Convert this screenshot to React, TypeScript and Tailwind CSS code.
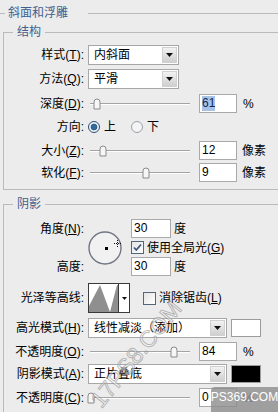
import React from 'react';

type LabelProps = { text: string; hot?: string };

function Label({ text, hot }: LabelProps) {
  return (
    <span className="w-[80px] shrink-0 whitespace-nowrap text-right">
      {text}
      {hot && (
        <>
          (<span className="underline underline-offset-[1px]">{hot}</span>)
        </>
      )}
      :
    </span>
  );
}

function Select({ value, width }: { value: string; width: string }) {
  return (
    <div className={`ml-[4px] flex h-[20px] items-stretch border border-[#a7a7a7] bg-white ${width}`}>
      <span className="flex-1 overflow-hidden whitespace-nowrap pl-[5px] leading-[18px]">{value}</span>
      <span className="m-[1px] flex w-[15px] items-center justify-center border border-[#d0d0d0] bg-gradient-to-b from-[#f2f2f2] to-[#cfcfcf]">
        <svg width="7" height="4" viewBox="0 0 7 4">
          <path d="M0 0h7L3.5 4z" fill="#111" />
        </svg>
      </span>
    </div>
  );
}

function Slider({ pos }: { pos: number }) {
  return (
    <div className="relative ml-[6px] h-[14px] w-[100px]">
      <div className="absolute left-0 right-0 top-[6px] h-[2px] border-b border-white bg-[#a4a4a4]" />
      <svg
        className="absolute top-[1px]"
        style={{ left: pos - 4 }}
        width="8"
        height="12"
        viewBox="0 0 8 12"
      >
        <path d="M1 4a3 3 0 0 1 6 0v7H1z" fill="#f6f6f6" stroke="#8a8a8a" />
      </svg>
    </div>
  );
}

function Field({ value, selected, width = 'w-[38px]', className = 'ml-[9px]' }: { value: string; selected?: boolean; width?: string; className?: string }) {
  return (
    <div className={`flex h-[19px] items-center border border-[#a9a9a9] bg-white pl-[2px] leading-[15px] ${width} ${className}`}>
      {selected ? <span className="bg-[#a8c2e6] text-[#10285a]">{value}</span> : <span>{value}</span>}
    </div>
  );
}

function Radio({ checked }: { checked?: boolean }) {
  return (
    <svg width="12" height="12" viewBox="0 0 12 12">
      <circle cx="6" cy="6" r="5.5" fill={checked ? '#eef2f7' : '#f4f4f4'} stroke={checked ? '#2b4c74' : '#9aa0a8'} />
      {checked && <circle cx="6" cy="6" r="3" fill="#2f6b9e" stroke="#1d4166" strokeWidth="0.6" />}
    </svg>
  );
}

function Checkbox({ checked }: { checked?: boolean }) {
  return (
    <span className="flex h-[13px] w-[13px] items-center justify-center border border-[#55657a] bg-gradient-to-br from-[#e4e4e4] to-white">
      {checked && (
        <svg width="9" height="9" viewBox="0 0 9 9">
          <path d="M1 4.5l2.3 2.5L8 1.5" fill="none" stroke="#3a5680" strokeWidth="1.8" />
        </svg>
      )}
    </span>
  );
}

function Group({ title, className = '', children }: { title: string; className?: string; children: React.ReactNode }) {
  return (
    <fieldset className={`ml-[3px] w-[290px] border border-[#bababa] ${className}`}>
      <legend className="ml-[9px] px-[4px] text-[12px] leading-[16px] text-[#3f5f8f]">{title}</legend>
      {children}
    </fieldset>
  );
}

export default function App() {
  return (
    <div className="relative h-[412px] w-[278px] overflow-hidden bg-[#ececec] font-['Liberation_Sans','Noto_Sans_CJK_SC',sans-serif] text-[12px] text-black">
      {/* section header */}
      <div className="flex h-[24px] items-center pt-[2px]">
        <div className="w-[5px] border-t border-[#bababa]" />
        <span className="ml-[3px] leading-[16px] text-[#3f5f8f]">斜面和浮雕</span>
        <div className="ml-[20px] flex-1 border-t border-[#bababa]" />
      </div>

      <Group title="结构">
        <div className="pb-[7px] pt-[5px]">
          <div className="flex h-[20px] items-center">
            <Label text="样式" hot="T" />
            <Select value="内斜面" width="w-[91px]" />
          </div>
          <div className="mt-[4px] flex h-[20px] items-center">
            <Label text="方法" hot="Q" />
            <Select value="平滑" width="w-[91px]" />
          </div>
          <div className="mt-[5px] flex h-[19px] items-center">
            <Label text="深度" hot="D" />
            <Slider pos={7} />
            <Field value="61" selected />
            <span className="ml-[6px]">%</span>
          </div>
          <div className="flex h-[27px] items-center">
            <Label text="方向" />
            <span className="ml-[4px] flex items-center">
              <Radio checked />
            </span>
            <span className="ml-[4px]">上</span>
            <span className="ml-[15px] flex items-center">
              <Radio />
            </span>
            <span className="ml-[4px]">下</span>
          </div>
          <div className="mt-[1px] flex h-[19px] items-center">
            <Label text="大小" hot="Z" />
            <Slider pos={13} />
            <Field value="12" />
            <span className="ml-[5px]">像素</span>
          </div>
          <div className="mt-[3px] flex h-[19px] items-center">
            <Label text="软化" hot="F" />
            <Slider pos={56} />
            <Field value="9" />
            <span className="ml-[5px]">像素</span>
          </div>
        </div>
      </Group>

      <Group title="阴影" className="mt-[6px] h-[260px]">
        <div className="pt-[7px]">
          <div className="flex h-[57px] items-center">
            <div className="flex h-full w-[80px] flex-col justify-between">
              <div className="flex h-[19px] items-center justify-end">
                <Label text="角度" hot="N" />
              </div>
              <div className="flex h-[19px] items-center justify-end">
                <Label text="高度" />
              </div>
            </div>
            <svg className="ml-[4px]" width="34" height="34" viewBox="0 0 34 34">
              <circle cx="17" cy="17" r="16" fill="#f1f1f1" stroke="#727585" strokeWidth="1.4" />
              <rect x="17" y="16" width="3" height="3" fill="#000" />
              <g stroke="#111" strokeWidth="1" strokeDasharray="1 1">
                <line x1="26" y1="12.5" x2="33" y2="12.5" />
                <line x1="29.5" y1="9" x2="29.5" y2="16" />
              </g>
            </svg>
            <div className="ml-[9px] flex flex-col">
              <div className="flex h-[19px] items-center">
                <Field value="30" width="w-[40px]" className="" />
                <span className="ml-[3px]">度</span>
              </div>
              <div className="flex h-[19px] items-center">
                <Checkbox checked />
                <span className="ml-[3px]">
                  使用全局光(<span className="underline underline-offset-[1px]">G</span>)
                </span>
              </div>
              <div className="flex h-[19px] items-center">
                <Field value="30" width="w-[40px]" className="" />
                <span className="ml-[3px]">度</span>
              </div>
            </div>
          </div>

          <div className="mt-[7px] flex h-[30px] items-center">
            <Label text="光泽等高线" />
            <div className="ml-[4px] flex h-[30px] w-[42px] border border-[#3a3a3a] bg-white">
              <svg width="29" height="28" viewBox="0 0 29 28">
                <path d="M0 28L0 22L11 1L21 28L28 1L29 1L29 28z" fill="#8f8f8f" />
              </svg>
              <div className="flex flex-1 items-center justify-center border-l border-[#3a3a3a]">
                <svg width="5" height="3" viewBox="0 0 5 3">
                  <path d="M0 0h5L2.5 3z" fill="#111" />
                </svg>
              </div>
            </div>
            <span className="ml-[13px]">
              <Checkbox />
            </span>
            <span className="ml-[3px]">
              消除锯齿(<span className="underline underline-offset-[1px]">L</span>)
            </span>
          </div>

          <div className="mt-[5px] flex h-[20px] items-center">
            <Label text="高光模式" hot="H" />
            <Select value="线性减淡（添加）" width="w-[139px]" />
            <div className="ml-[4px] h-[18px] w-[30px] border border-[#9c9c9c] bg-white" />
          </div>
          <div className="mt-[4px] flex h-[19px] items-center">
            <Label text="不透明度" hot="O" />
            <Slider pos={84} />
            <Field value="84" />
            <span className="ml-[6px]">%</span>
          </div>
          <div className="mt-[3px] flex h-[20px] items-center">
            <Label text="阴影模式" hot="A" />
            <Select value="正片叠底" width="w-[139px]" />
            <div className="ml-[4px] h-[18px] w-[30px] border border-[#9c9c9c] bg-black" />
          </div>
          <div className="mt-[4px] flex h-[19px] items-center">
            <Label text="不透明度" hot="C" />
            <Slider pos={1} />
            <Field value="0" />
            <span className="ml-[6px]">%</span>
          </div>
        </div>
      </Group>

      {/* watermarks */}
      <div className="pointer-events-none absolute left-[64px] top-[340px] w-[144px] rotate-[-51deg] text-center text-[23px] leading-[28px] text-white/50 [-webkit-text-stroke:1px_rgba(120,120,120,0.5)]">
        17PS8.COM
      </div>
      <div className="pointer-events-none absolute bottom-0 right-0 flex h-[25px] w-[67px] justify-center rounded-tl-[4px] bg-[#8c8c8c]/80 pt-[2px] text-[12px] leading-[16px] text-white">
        PS369.COM
      </div>
    </div>
  );
}
